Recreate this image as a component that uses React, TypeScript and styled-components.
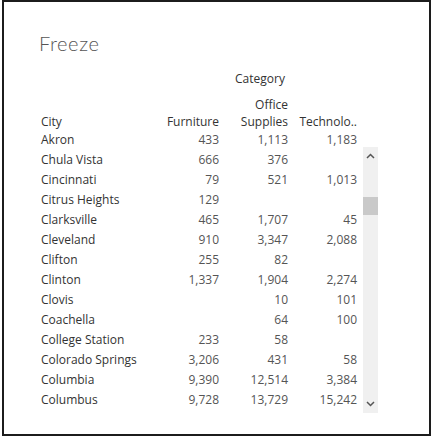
import React from "react";
import styled, { createGlobalStyle } from "styled-components";

const Global = createGlobalStyle`
  html, body { margin: 0; padding: 0; background: #fff; }
  body { font-family: "Open Sans", Lato, sans-serif; }
`;

const Frame = styled.div`
  box-sizing: border-box;
  margin-left: 2px;
  width: 429px;
  height: 436px;
  border: 2px solid #1c1c1c;
  background: #fff;
  padding-top: 29px;
`;

const Title = styled.div`
  padding-left: 35px;
  font-family: Lato, sans-serif;
  font-size: 20px;
  line-height: 24px;
  font-weight: 300;
  color: #555;
  letter-spacing: 0.6px;
`;

const Grid = styled.div`
  display: grid;
  grid-template-columns: 110px 68px 69px 69px;
  padding-left: 37px;
  font-size: 12px;
`;

const CategoryLabel = styled.div`
  grid-column: 2 / 5;
  margin-top: 16px;
  margin-bottom: 10px;
  line-height: 15px;
  text-align: center;
  padding-left: 12px;
  color: #333;
`;

const HeadCell = styled.div<{ $right?: boolean }>`
  line-height: 17px;
  color: #333;
  text-align: ${(p) => (p.$right ? "right" : "left")};
  align-self: end;
  white-space: nowrap;
`;

const Body = styled.div`
  display: flex;
  align-items: flex-start;
`;

const Rows = styled.div`
  display: grid;
  grid-template-columns: 110px 68px 69px 69px;
  padding-left: 37px;
  font-size: 12px;
`;

const Cell = styled.div<{ $right?: boolean }>`
  line-height: 20px;
  height: 20px;
  color: ${(p) => (p.$right ? "#555" : "#333")};
  text-align: ${(p) => (p.$right ? "right" : "left")};
  white-space: nowrap;
`;

const Scrollbar = styled.div`
  margin-left: 6px;
  margin-top: 17px;
  width: 15px;
  height: 266px;
  background: #f0f0f0;
  display: flex;
  flex-direction: column;
  align-items: center;
`;

const Arrow = styled.svg`
  width: 9px;
  height: 6px;
  margin: 6px 0;
  flex: none;
`;

const Thumb = styled.div`
  width: 15px;
  height: 18px;
  background: #c9c9c9;
  margin-top: 32px;
`;

const Spacer = styled.div`
  flex: 1;
`;

type Row = [string, string, string, string];

const data: Row[] = [
  ["Akron", "433", "1,113", "1,183"],
  ["Chula Vista", "666", "376", ""],
  ["Cincinnati", "79", "521", "1,013"],
  ["Citrus Heights", "129", "", ""],
  ["Clarksville", "465", "1,707", "45"],
  ["Cleveland", "910", "3,347", "2,088"],
  ["Clifton", "255", "82", ""],
  ["Clinton", "1,337", "1,904", "2,274"],
  ["Clovis", "", "10", "101"],
  ["Coachella", "", "64", "100"],
  ["College Station", "233", "58", ""],
  ["Colorado Springs", "3,206", "431", "58"],
  ["Columbia", "9,390", "12,514", "3,384"],
  ["Columbus", "9,728", "13,729", "15,242"],
];

export default function App() {
  return (
    <>
      <Global />
      <Frame>
        <Title>Freeze</Title>
        <Grid>
          <CategoryLabel>Category</CategoryLabel>
          <HeadCell>City</HeadCell>
          <HeadCell $right>Furniture</HeadCell>
          <HeadCell $right>
            Office
            <br />
            Supplies
          </HeadCell>
          <HeadCell $right>Technolo..</HeadCell>
        </Grid>
        <Body>
          <Rows>
            {data.map((r) => (
              <React.Fragment key={r[0]}>
                <Cell>{r[0]}</Cell>
                <Cell $right>{r[1]}</Cell>
                <Cell $right>{r[2]}</Cell>
                <Cell $right>{r[3]}</Cell>
              </React.Fragment>
            ))}
          </Rows>
          <Scrollbar>
            <Arrow viewBox="0 0 9 6">
              <path d="M1 5 L4.5 1.5 L8 5" fill="none" stroke="#555" strokeWidth="1.5" />
            </Arrow>
            <Thumb />
            <Spacer />
            <Arrow viewBox="0 0 9 6">
              <path d="M1 1 L4.5 4.5 L8 1" fill="none" stroke="#555" strokeWidth="1.5" />
            </Arrow>
          </Scrollbar>
        </Body>
      </Frame>
    </>
  );
}
